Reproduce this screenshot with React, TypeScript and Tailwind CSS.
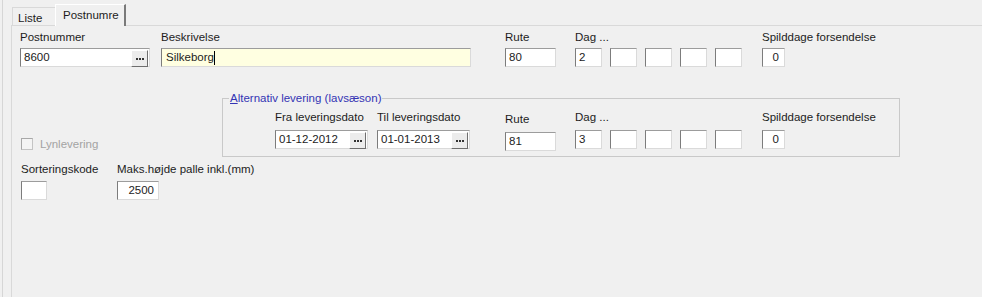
import type { ReactNode } from "react";

const dagRow1 = ["2", "", "", "", ""];
const dagRow2 = ["3", "", "", "", ""];

function Label({ children, className = "" }: { children: ReactNode; className?: string }) {
  return <div className={`h-[19px] leading-[16px] whitespace-nowrap ${className}`}>{children}</div>;
}

function Box({ children, className = "" }: { children?: ReactNode; className?: string }) {
  return (
    <div
      className={`h-[19px] flex items-center border border-[#dadada] border-l-[#7c7c7c] border-t-[#9c9c9c] leading-none whitespace-nowrap pt-[1px] ${className}`}
    >
      {children}
    </div>
  );
}

function DotsButton() {
  return (
    <div className="ml-auto h-[17px] w-[17px] flex items-center justify-center gap-[1px] pt-[1px] bg-[#ececec] border border-white border-r-[#6e6e6e] border-b-[#6e6e6e]">
      <span className="w-[2px] h-[2px] bg-[#333]" />
      <span className="w-[2px] h-[2px] bg-[#333]" />
      <span className="w-[2px] h-[2px] bg-[#333]" />
    </div>
  );
}

function DagBoxes({ values }: { values: string[] }) {
  return (
    <div className="flex gap-[8px]">
      {values.map((v, i) => (
        <Box key={i} className="w-[27px] bg-white pl-[3px]">
          {v}
        </Box>
      ))}
    </div>
  );
}

export default function App() {
  return (
    <div className="w-[982px] h-[297px] bg-[#f0f0f0] overflow-hidden pl-[2px] font-['Liberation_Sans',Arial,sans-serif] text-[11.5px] text-[#1c1c1c]">
      <div className="h-full border-l border-[#d6d6d6] pl-[8px] pt-[4px] flex flex-col">
        {/* Tabs */}
        <div className="flex items-end h-[21px]">
          <div className="w-[45px] h-[18px] ml-[1px] border-t border-l border-[#d9d9d9] pl-[5px] pt-[3px] leading-[14px]">
            Liste
          </div>
          <div className="relative -ml-[2px] -mb-[1px] w-[71px] h-[22px] bg-[#f0f0f0] border-t border-l border-white border-r-2 border-r-[#7a7a7a] pl-[7px] pt-[3px] leading-[14px]">
            Postnumre
          </div>
        </div>

        {/* Panel */}
        <div className="flex-1 border-t border-l border-[#d9d9d9] flex flex-col">
          {/* Row 1 */}
          <div className="flex mt-[3px]">
            <div className="ml-[8px] w-[130px]">
              <Label>Postnummer</Label>
              <Box className="bg-white pl-[3px] pr-[1px]">
                8600
                <DotsButton />
              </Box>
            </div>
            <div className="ml-[11px] w-[310px]">
              <Label>Beskrivelse</Label>
              <Box className="bg-[#ffffe1] pl-[4px]">
                Silkeborg
                <span className="inline-block w-px h-[14px] bg-black" />
              </Box>
            </div>
            <div className="ml-[34px] w-[51px]">
              <Label>Rute</Label>
              <Box className="bg-white pl-[3px]">80</Box>
            </div>
            <div className="ml-[19px]">
              <Label>Dag ...</Label>
              <DagBoxes values={dagRow1} />
            </div>
            <div className="ml-[20px]">
              <Label>Spilddage forsendelse</Label>
              <Box className="w-[23px] bg-white justify-end pr-[5px]">0</Box>
            </div>
          </div>

          {/* Row 2 */}
          <div className="flex mt-[24px]">
            <div className="w-[210px] flex flex-col justify-end pb-[6px]">
              <div className="ml-[9px] flex items-center gap-[7px] text-[#a3a3a3]">
                <div className="w-[12px] h-[12px] bg-[#f4f4f4] border border-[#c4c4c4] border-l-[#a8a8a8] border-t-[#a8a8a8]" />
                <span className="leading-[14px]">Lynlevering</span>
              </div>
            </div>
            <fieldset className="w-[678px] border border-[#c9c9c9] pb-[6px]">
              <legend className="ml-[6px] px-[1px] leading-[14px] text-[#3434b4]">
                <span className="underline">A</span>lternativ levering (lavsæson)
              </legend>
              <div className="flex h-[41px] mt-[4px]">
                <div className="ml-[52px] w-[93px]">
                  <Label className="h-[21px]">Fra leveringsdato</Label>
                  <Box className="bg-white pl-[3px] pr-[1px]">
                    01-12-2012
                    <DotsButton />
                  </Box>
                </div>
                <div className="ml-[9px] w-[93px]">
                  <Label className="h-[21px]">Til leveringsdato</Label>
                  <Box className="bg-white pl-[3px] pr-[1px]">
                    01-01-2013
                    <DotsButton />
                  </Box>
                </div>
                <div className="ml-[35px] w-[51px] pt-[2px]">
                  <Label className="h-[21px]">Rute</Label>
                  <Box className="bg-white pl-[3px]">81</Box>
                </div>
                <div className="ml-[19px]">
                  <Label className="h-[21px]">Dag ...</Label>
                  <DagBoxes values={dagRow2} />
                </div>
                <div className="ml-[20px]">
                  <Label className="h-[21px]">Spilddage forsendelse</Label>
                  <Box className="w-[23px] bg-white justify-end pr-[5px]">0</Box>
                </div>
              </div>
            </fieldset>
          </div>

          {/* Row 3 */}
          <div className="flex mt-[4px]">
            <div className="ml-[9px] w-[96px]">
              <Label className="h-[20px]">Sorteringskode</Label>
              <Box className="w-[26px] bg-white" />
            </div>
            <div>
              <Label className="h-[20px]">Maks.højde palle inkl.(mm)</Label>
              <Box className="w-[42px] bg-white justify-end pr-[4px]">2500</Box>
            </div>
          </div>
        </div>
      </div>
    </div>
  );
}
